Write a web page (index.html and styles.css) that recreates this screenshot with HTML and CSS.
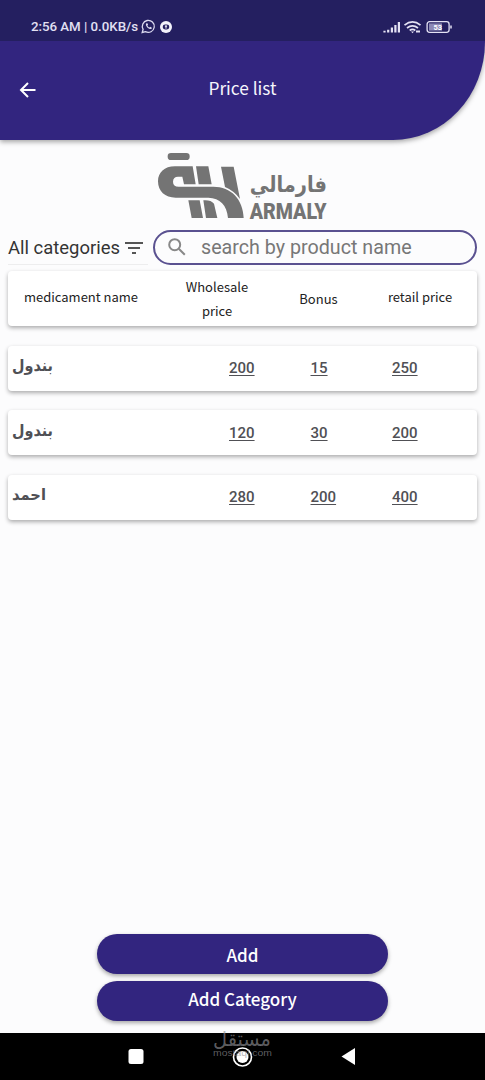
FILE: index.html
```html
<!DOCTYPE html>
<html lang="en">
<head>
<meta charset="utf-8">
<title>Price list</title>
<link rel="stylesheet" href="styles.css">
</head>
<body>
<div class="screen">
  <header class="header">
    <div class="status">
      <span class="clock">2:56 AM | 0.0KB/s</span>
      <svg class="chat" width="15" height="15" viewBox="0 0 15 15" fill="none" stroke="#dcdaf0"><path d="M1.2 13.5l.9-3.1a6 6 0 1 1 2.4 2.3z" stroke-width="1.3"/><path d="M5 4.5c-.7 2.600 2.500 6 5.400 5.500l.5-1.300-1.700-.9-.8.8c-1-.4-1.700-1.200-2-2l.7-.8-.7-1.600z" fill="#dcdaf0" stroke="none"/></svg>
      <svg class="rec" width="12" height="12" viewBox="0 0 12 12"><circle cx="6" cy="6" r="6" fill="#f3f2fb"/><rect x="2.700" y="3.600" width="6.600" height="4.800" rx="2.400" fill="#241f60"/><path d="M6 4.300v3.400M4.900 5.200h2.200" stroke="#f3f2fb"/></svg>
      <svg class="signals" width="70" height="14" viewBox="0 0 70 14" fill="none" stroke="#e4e2f4">
        <path d="M2.500 12.500v-1.700M6.200 12.500V9.800M9.900 12.500V7.500M13.400 12.500V5M16.900 12.500V2" stroke-width="2.200"/>
        <path d="M22.500 5.200q8-6.500 16 0M25 8q5.500-4.400 11 0M27.700 10.500q2.800-2.200 5.600 0" stroke-width="1.700"/><path d="M29 11.500h3l-1.500 1.700zM34 10.500h4v2h-4z" fill="#e4e2f4" stroke="none"/>
        <rect x="45.100" y="1.700" width="22" height="10.600" rx="2.500" stroke-width="1.300"/><rect x="47" y="3.400" width="13" height="7.200" fill="#8c88b5" stroke="none"/><path d="M69 5.500v3" stroke-width="1.500"/><text class="battery" x="51.500" y="10.300">53</text>
      </svg>
    </div>
    <div class="titlebar">
      <svg class="back" width="18" height="18" viewBox="0 0 18 18" fill="none" stroke="#fff" stroke-width="2"><path d="M16.500 9H2.500M9 2L2 9l7 7"/></svg>
      <h1 class="title">Price list</h1>
    </div>
  </header>

  <svg class="logo" width="195" height="85" viewBox="0 0 585 255" fill="#747474">
    <rect x="68" y="24" width="66" height="21" rx="10"/>
    <path d="M143 64H90C58 64 39 83 39 109C39 139 60 158 92 158H190C225 159 246 180 249 219H296C294 162 258 125 205 125H101C90 125 84 120 84 110C84 100 90 95 99 95H112L117 118H152Z"/>
    <path d="M153 64H190L200 118H161ZM228 65H266L285 162Q267 137 240 126ZM130 166H164L174 219H140ZM175 166Q197 164 207 176L217 219H183Z"/>
    <text class="logo-ar" x="546" y="142" textLength="232" lengthAdjust="spacingAndGlyphs" direction="rtl">فارمالي</text>
    <text class="logo-en" x="314" y="221" textLength="231" lengthAdjust="spacingAndGlyphs">ARMALY</text>
  </svg>

  <div class="filters">
    <div class="category"><span>All categories</span>
      <svg width="18" height="12" viewBox="0 0 18 12" stroke="#555" stroke-width="1.800"><path d="M0 1h18M3 6h12M7 11h4"/></svg>
    </div>
    <div class="search">
      <svg width="18" height="18" viewBox="0 0 18 18" fill="none" stroke="#888" stroke-width="2"><circle cx="6.700" cy="6.700" r="5.500"/><path d="M10.800 10.800l6 6"/></svg>
      <span>search by product name</span>
    </div>
  </div>

  <div class="card head">
    <span class="h-name">medicament name</span><span class="h-whole">Wholesale price</span><span class="h-bonus">Bonus</span><span class="h-retail">retail price</span>
  </div>
  <div class="card row"><svg class="name" width="50" height="30"><text x="45" y="19" textLength="41" lengthAdjust="spacingAndGlyphs" direction="rtl">بندول</text></svg><u>200</u><u>15</u><u>250</u></div>
  <div class="card row"><svg class="name" width="50" height="30"><text x="45" y="19" textLength="41" lengthAdjust="spacingAndGlyphs" direction="rtl">بندول</text></svg><u>120</u><u>30</u><u>200</u></div>
  <div class="card row"><svg class="name" width="50" height="30"><text x="38" y="19" textLength="34" lengthAdjust="spacingAndGlyphs" direction="rtl">احمد</text></svg><u>280</u><u>200</u><u>400</u></div>

  <div class="actions">
    <button class="btn">Add</button>
    <button class="btn second">Add Category</button>
  </div>

  <nav class="navbar">
    <svg width="485" height="47" viewBox="0 0 485 47">
      <rect x="128.500" y="16" width="15" height="15" rx="2.500" fill="#fff"/>
      <circle cx="242.500" cy="24" r="9" fill="none" stroke="#fff" stroke-width="1.600"/><circle cx="242.500" cy="24" r="6" fill="#fff"/>
      <path d="M341.500 23.500L355 15v17z" fill="#fff"/>
    </svg>
    <svg class="watermark" width="70" height="40" viewBox="0 0 70 40">
      <text class="wm-ar" x="63" y="22" textLength="58" lengthAdjust="spacingAndGlyphs" direction="rtl">مستقل</text>
      <text class="wm-en" x="5" y="32" textLength="59" lengthAdjust="spacingAndGlyphs">mostaql.com</text>
    </svg>
  </nav>
</div>
</body>
</html>
```
FILE: styles.css
```css
* { box-sizing: border-box; }
body { margin: 0; background: #fcfcfd; }
svg { overflow: visible; }
.screen { width: 485px; height: 1080px; display: flex; flex-direction: column; overflow: hidden; font-family: Roboto, sans-serif; }
.header { height: 140px; flex: none; background: #32257f; border-radius: 0 0 92px 0 / 0 0 98px 0; box-shadow: 0 2px 5px rgba(0,0,0,.35); }
.status { height: 41px; background: #241f60; display: flex; align-items: center; padding: 12px 33px 0 31px; }
.clock { font-size: 13.3px; font-weight: 500; color: #e2e0f3; white-space: nowrap; width: 110px; letter-spacing: -.03px; }
.rec { margin-left: 4px; }
.signals { margin-left: auto; }
.battery { font: bold 7.5px Roboto, sans-serif; fill: #fff; stroke: none; }
.titlebar { height: 98px; display: grid; grid-template-columns: 60px 1fr 60px; align-items: center; }
.back { margin-left: 19px; }
.title { margin: 0; text-align: center; color: #f6f5fc; font: 400 17.3px/24px "Noto Sans CJK SC", sans-serif; padding-bottom: 5px; }
.logo { margin: 5px 0 0 145px; flex: none; }
.logo-ar { font: 700 66px "DejaVu Sans", sans-serif; }
.logo-en { font: 900 65px Roboto, sans-serif; }
.filters { display: flex; height: 36px; margin: 0 8px; align-items: center; justify-content: space-between; flex: none; }
.category { width: 140px; height: 34px; border-bottom: 1px solid #ededee; display: flex; align-items: center; gap: 5px; font-size: 18.45px; color: #343434; white-space: nowrap; }
.search { width: 324px; height: 35px; border: 2px solid #5a5190; border-radius: 18px; display: flex; align-items: center; gap: 15px; padding: 0 13px; color: #777; font-size: 19.7px; white-space: nowrap; margin-bottom: 2px; }
.card { background: #fff; margin: 0 8px; border-radius: 4px; box-shadow: 0 2px 4px rgba(0,0,0,.32); flex: none; }
.head { height: 55px; margin-top: 5px; display: grid; grid-template-columns: 146px 126px 77px 126px; align-items: center; text-align: center; font: 400 13px/24px "Noto Sans CJK SC", sans-serif; color: #222; padding-top: 1px; }
.h-name { padding-bottom: 4px; }
.h-whole { padding: 0 30px; }
.h-retail { padding-bottom: 4px; }
.row { height: 45px; margin-top: 19.5px; display: grid; grid-template-columns: 221px 81.500px 81.500px 1fr; align-items: center; font-size: 15px; font-weight: 500; color: #505055; }
.name { margin-top: -2px; fill: #505055; font: 700 16px "DejaVu Sans", sans-serif; }
.row u { text-decoration-thickness: 1px; text-underline-offset: 2px; }
.actions { margin: auto 97px 12px; display: flex; flex-direction: column; gap: 7px; }
.btn { height: 40px; border: 0; border-radius: 20px; background: #32257f; color: #fff; font: 500 17px/24px "Noto Sans CJK SC", sans-serif; box-shadow: 0 2px 4px rgba(0,0,0,.35); padding: 1px 0 0; }
.second { padding: 0 0 5px; }
.navbar { height: 47px; background: #000; position: relative; flex: none; }
.watermark { position: absolute; left: 208px; top: -9px; fill: rgba(145,145,150,.65); }
.wm-ar { font: 20px "DejaVu Sans", sans-serif; }
.wm-en { font: 9.5px "Liberation Sans", sans-serif; }
```
